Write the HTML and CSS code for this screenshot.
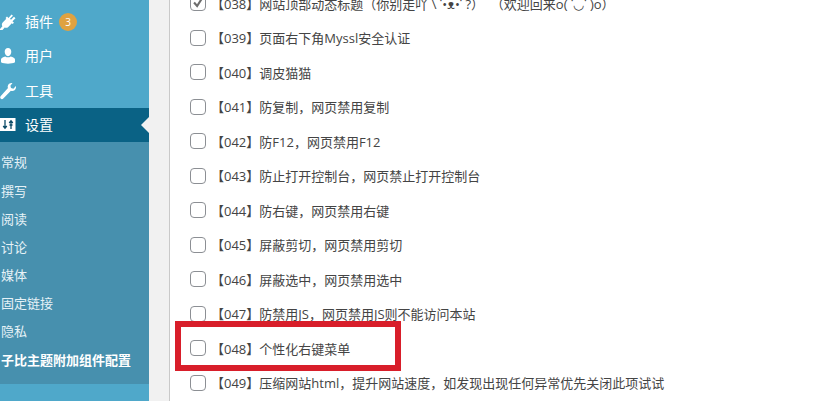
FILE: index.html
```html
<!DOCTYPE html>
<html lang="zh">
<head>
<meta charset="utf-8">
<title>设置</title>
<link rel="stylesheet" href="styles.css">
</head>
<body>
<div class="page">
  <nav class="sidebar">
    <ul class="menu">
      <li class="item">
        <svg class="icon" viewBox="0 0 16 18"><path d="M11.500 1.500 8.500 5 7 3.500 5.500 5l.8.800L2.700 9.500c-1 1.100-1.100 2.700-.3 3.800L-1 17h3.500l2.200-2.500c1.100.6 2.600.4 3.600-.6l3.500-3.600.8.800 1.400-1.400-1.500-1.500 3-2.900-1.500-1.500-3 2.900-1-1 3-2.900z" fill="#fff"/></svg>
        <span class="label">插件</span><span class="badge">3</span>
      </li>
      <li class="item">
        <svg class="icon" viewBox="0 0 16 18"><path d="M8 1c2 0 3.300 1.700 3.300 3.800S10 9.200 8 9.200 4.700 6.900 4.700 4.800 6 1 8 1zM5.300 9.400c1.600 1.200 3.800 1.200 5.400 0 2.300.5 4.300 1.600 4.300 3.200v2.700c-1.800 1.100-4.400 1.400-7 1.400s-5.200-.3-7-1.400v-2.700c0-1.600 2-2.700 4.300-3.200z" fill="#fff"/></svg>
        <span class="label">用户</span>
      </li>
      <li class="item">
        <svg class="icon" viewBox="0 0 16 18"><path d="M12.500 1c-2.200-.5-4.300.8-4.700 2.900-.2.700-.1 1.400.2 2L.8 14c-.8.900-.8 1.900-.1 2.600.7.700 1.800.7 2.600 0l7.600-7.900c2.200.8 4.500-.4 5-2.700.2-.7.200-1.300 0-1.900l-2.500 2.600-2.400-.6-.6-2.400z" fill="#fff"/></svg>
        <span class="label">工具</span>
      </li>
      <li class="item active">
        <svg class="icon" viewBox="0 0 16 18"><rect x="0" y="2" width="15.500" height="13" fill="#fff"/><path d="M5 4v8M3.200 10 5 12.200 6.800 10M11 5v8M9.200 7 11 4.800 12.800 7M9.500 9h3" stroke="#0a4a66" stroke-width="1.300" fill="none"/></svg>
        <span class="label">设置</span>
      </li>
    </ul>
    <ul class="submenu">
      <li>常规</li>
      <li>撰写</li>
      <li>阅读</li>
      <li>讨论</li>
      <li>媒体</li>
      <li>固定链接</li>
      <li>隐私</li>
      <li class="current">子比主题附加组件配置</li>
    </ul>
  </nav>
  <main class="content">
    <ul class="options">
      <li class="option"><span class="box"><svg viewBox="0 0 16 16"><path d="M3.500 7.500 7 11.500 13 2" stroke="#6d6d6d" stroke-width="2.400" fill="none"/></svg></span><span>【038】网站顶部动态标题（你别走吖 \ ˙•ᴥ•˙ ?）  （欢迎回来o( ˙◡˙ )o）</span></li>
      <li class="option"><span class="box"></span><span>【039】页面右下角Myssl安全认证</span></li>
      <li class="option"><span class="box"></span><span>【040】调皮猫猫</span></li>
      <li class="option"><span class="box"></span><span>【041】防复制，网页禁用复制</span></li>
      <li class="option"><span class="box"></span><span>【042】防F12，网页禁用F12</span></li>
      <li class="option"><span class="box"></span><span>【043】防止打开控制台，网页禁止打开控制台</span></li>
      <li class="option"><span class="box"></span><span>【044】防右键，网页禁用右键</span></li>
      <li class="option"><span class="box"></span><span>【045】屏蔽剪切，网页禁用剪切</span></li>
      <li class="option"><span class="box"></span><span>【046】屏蔽选中，网页禁用选中</span></li>
      <li class="option"><span class="box"></span><span>【047】防禁用JS，网页禁用JS则不能访问本站</span></li>
      <li class="option"><span class="box"></span><span>【048】个性化右键菜单</span></li>
      <li class="option"><span class="box"></span><span>【049】压缩网站html，提升网站速度，如发现出现任何异常优先关闭此项试试</span></li>
    </ul>
    <div class="highlight"></div>
  </main>
</div>
</body>
</html>
```

FILE: styles.css
```css
* {
  box-sizing: border-box;
}

html,
body {
  margin: 0;
  padding: 0;
  height: 401px;
  overflow: hidden;
  background: #f1f1f1;
}

body {
  font-family: "Open Sans", "Noto Sans CJK SC", sans-serif;
  font-size: 13px;
}

ul {
  list-style: none;
  margin: 0;
  padding: 0;
}

.page {
  display: flex;
  height: 401px;
}

.sidebar {
  width: 149px;
  flex: none;
  background: #4fa8ca;
  color: #fff;
  padding-top: 5px;
}

.item {
  position: relative;
  display: flex;
  align-items: center;
  height: 34.33px;
  font-size: 14px;
}

.label {
  padding-bottom: 2px;
}

.icon {
  width: 16px;
  height: 18px;
  margin-right: 9px;
  flex: none;
}

.badge {
  width: 18px;
  height: 18px;
  margin-left: 6px;
  border-radius: 50%;
  background: #dfa241;
  font-size: 10px;
  line-height: 18px;
  text-align: center;
}

.active {
  background: #0a6285;
}

.active::after {
  content: "";
  position: absolute;
  right: 0;
  top: 50%;
  margin-top: -8px;
  border: 8px solid transparent;
  border-right-color: #f1f1f1;
  border-left-width: 0;
}

.submenu {
  background: #4790ae;
  padding: 6px 0 10px 1px;
  font-size: 13px;
  color: #e6f2f7;
}

.submenu li {
  height: 28.2px;
  line-height: 28.2px;
  white-space: nowrap;
}

.submenu .current {
  color: #fff;
  font-weight: 700;
}

.content {
  position: relative;
  flex: 1;
  margin-left: 20px;
  background: #fff;
  border-left: 1px solid #c9c9c9;
  padding-left: 20px;
  overflow: hidden;
}

.options {
  margin-top: -14px;
}

.option {
  display: flex;
  align-items: center;
  height: 34.5px;
  color: #444;
  white-space: pre;
}

.option > span:last-child {
  margin-left: 5px;
}

.box {
  width: 16px;
  height: 16px;
  flex: none;
  border: 1px solid #8c8f94;
  border-radius: 4px;
  background: #fff;
}

.box svg {
  display: block;
  width: 14px;
  height: 14px;
}

.highlight {
  position: absolute;
  left: 5px;
  top: 321px;
  width: 226px;
  height: 50px;
  border: 6px solid #d81e2a;
}
```
